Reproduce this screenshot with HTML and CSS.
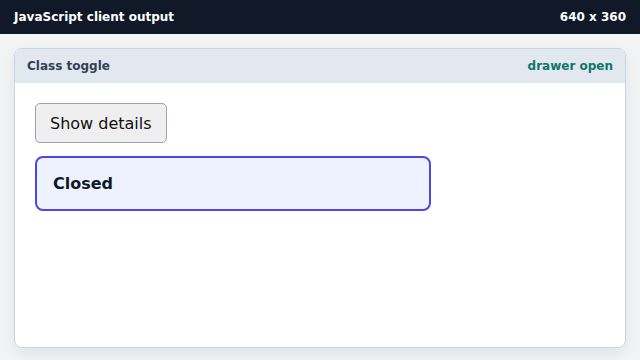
FILE: index.html
```html
<!DOCTYPE html>
<html lang="en">
<head>
    <meta charset="UTF-8">
    <title>JavaScript client output</title>
    <link rel="stylesheet" href="styles.css">
</head>
<body>
    <header class="topbar">
        <span class="topbar-title">JavaScript client output</span>
        <span class="topbar-size">640 x 360</span>
    </header>

    <main class="stage">
        <section class="panel">
            <div class="panel-head">
                <span class="panel-title">Class toggle</span>
                <span class="panel-state">drawer open</span>
            </div>
            <div class="panel-body">
                <button class="toggle-btn">Show details</button>
                <div class="drawer">Closed</div>
            </div>
        </section>
    </main>
</body>
</html>
```

FILE: styles.css
```css
* {
    margin: 0;
    padding: 0;
    box-sizing: border-box;
}

html, body {
    width: 640px;
    height: 360px;
    overflow: hidden;
}

body {
    font-family: 'DejaVu Sans', 'Liberation Sans', sans-serif;
    background: #f3f4f6;
    display: flex;
    flex-direction: column;
}

.topbar {
    height: 34px;
    background: #111827;
    color: #ffffff;
    display: flex;
    justify-content: space-between;
    align-items: center;
    padding: 0 14px;
    font-size: 12px;
    font-weight: 700;
}

.stage {
    flex: 1;
    padding: 14px 14px 12px;
    display: flex;
}

.panel {
    flex: 1;
    display: flex;
    flex-direction: column;
    background: #ffffff;
    border: 1px solid #cbd5e1;
    border-radius: 8px;
    overflow: hidden;
    box-shadow: 0 6px 16px rgba(15, 23, 42, 0.08);
}

.panel-head {
    height: 34px;
    background: #e2e8f0;
    display: flex;
    justify-content: space-between;
    align-items: center;
    padding: 0 12px;
    font-size: 12px;
    font-weight: 700;
}

.panel-title {
    color: #334155;
}

.panel-state {
    color: #0f766e;
}

.panel-body {
    padding: 20px;
    display: flex;
    flex-direction: column;
    align-items: flex-start;
    gap: 13px;
}

.toggle-btn {
    height: 40px;
    padding: 0 14px;
    font-family: inherit;
    font-size: 16px;
    color: #111111;
    background: #efefef;
    border: 1px solid #9ca3af;
    border-radius: 5px;
}

.drawer {
    width: 396px;
    height: 55px;
    display: flex;
    align-items: center;
    padding: 0 16px;
    background: #eef2ff;
    border: 2px solid #4f46e5;
    border-radius: 8px;
    font-size: 16px;
    font-weight: 700;
    color: #111827;
}
```
